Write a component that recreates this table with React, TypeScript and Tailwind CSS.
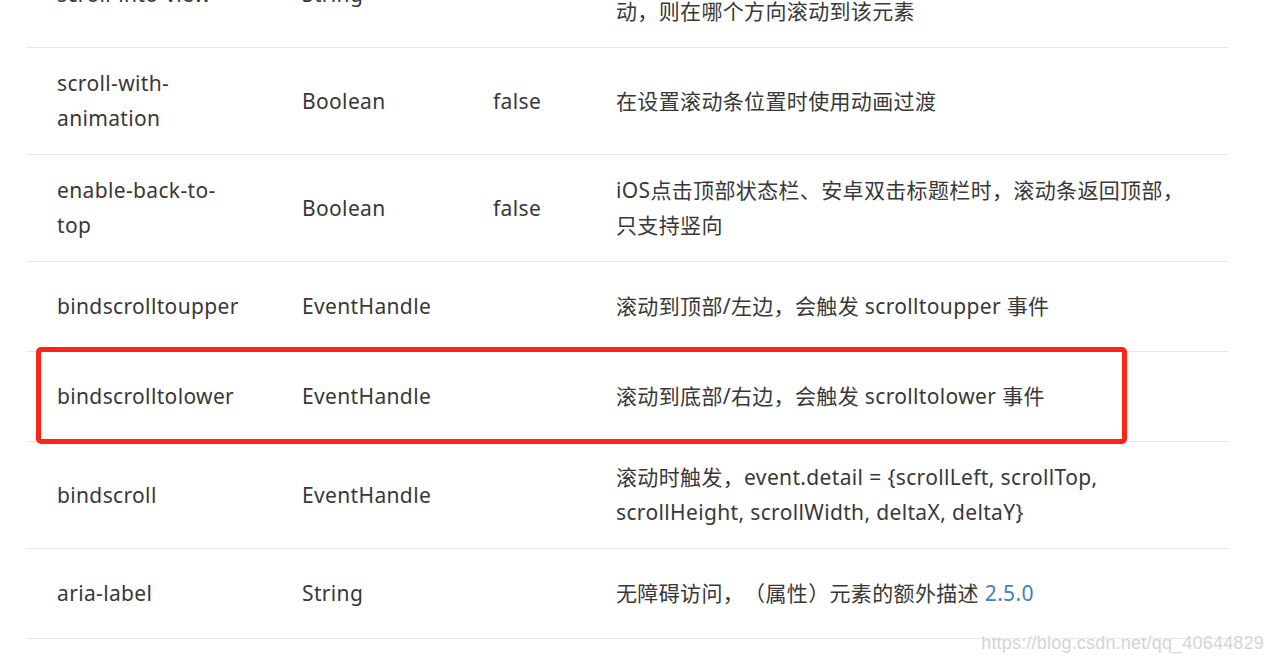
import React from "react";

type Row = {
  name: React.ReactNode;
  type: string;
  def: string;
  desc: React.ReactNode;
  h: string;
};

const rows: Row[] = [
  {
    name: "scroll-into-view",
    type: "String",
    def: "",
    desc: (
      <>
        值应为某子元素id（id不能以数字开头）。设置哪个方向可滚
        <br />
        动，则在哪个方向滚动到该元素
      </>
    ),
    h: "h-[107px]",
  },
  {
    name: (
      <>
        scroll-with-
        <br />
        animation
      </>
    ),
    type: "Boolean",
    def: "false",
    desc: "在设置滚动条位置时使用动画过渡",
    h: "h-[107px]",
  },
  {
    name: (
      <>
        enable-back-to-
        <br />
        top
      </>
    ),
    type: "Boolean",
    def: "false",
    desc: (
      <>
        iOS点击顶部状态栏、安卓双击标题栏时，滚动条返回顶部，
        <br />
        只支持竖向
      </>
    ),
    h: "h-[107px]",
  },
  {
    name: "bindscrolltoupper",
    type: "EventHandle",
    def: "",
    desc: "滚动到顶部/左边，会触发 scrolltoupper 事件",
    h: "h-[90px]",
  },
  {
    name: "bindscrolltolower",
    type: "EventHandle",
    def: "",
    desc: "滚动到底部/右边，会触发 scrolltolower 事件",
    h: "h-[90px]",
  },
  {
    name: "bindscroll",
    type: "EventHandle",
    def: "",
    desc: (
      <>
        滚动时触发，event.detail = {"{"}scrollLeft, scrollTop,
        <br />
        scrollHeight, scrollWidth, deltaX, deltaY{"}"}
      </>
    ),
    h: "h-[107px]",
  },
  {
    name: "aria-label",
    type: "String",
    def: "",
    desc: (
      <>
        无障碍访问，（属性）元素的额外描述{" "}
        <span className="text-[#3f7fc3]">2.5.0</span>
      </>
    ),
    h: "h-[90px]",
  },
];

export default function App() {
  return (
    <div
      className="relative w-[1272px] h-[662px] overflow-hidden bg-white text-[#383838] text-[21px] leading-[35px] tracking-[0.35px] [text-spacing-trim:space-all]"
      style={{ fontFamily: '"Noto Sans", "Noto Sans CJK SC", sans-serif' }}
    >
      <div className="ml-[26px] w-[1202px] -mt-[59px]">
        {rows.map((r, i) => (
          <div
            key={i}
            className={`grid grid-cols-[245px_191px_123px_1fr] items-center border-b border-[#e6e6e6] ${r.h}`}
          >
            <div className="pl-[31px]">{r.name}</div>
            <div className="pl-[31px]">{r.type}</div>
            <div className="pl-[31px]">{r.def}</div>
            <div className="pl-[31px]">{r.desc}</div>
          </div>
        ))}
      </div>

      {/* red highlight annotation */}
      <div className="absolute left-[36px] top-[347px] w-[1091px] h-[97px] border-[5px] border-[#fe2518] rounded-[5px]" />

      {/* watermark */}
      <div
        className="absolute right-[8px] top-[631px] text-[18px] leading-[24px] text-[#d4d4d4] tracking-[0.2px]"
        style={{
          fontFamily: '"Liberation Sans", Arial, sans-serif',
          textShadow: "0 0 1px #ffffff",
        }}
      >
        https://blog.csdn.net/qq_40644829
      </div>
    </div>
  );
}
